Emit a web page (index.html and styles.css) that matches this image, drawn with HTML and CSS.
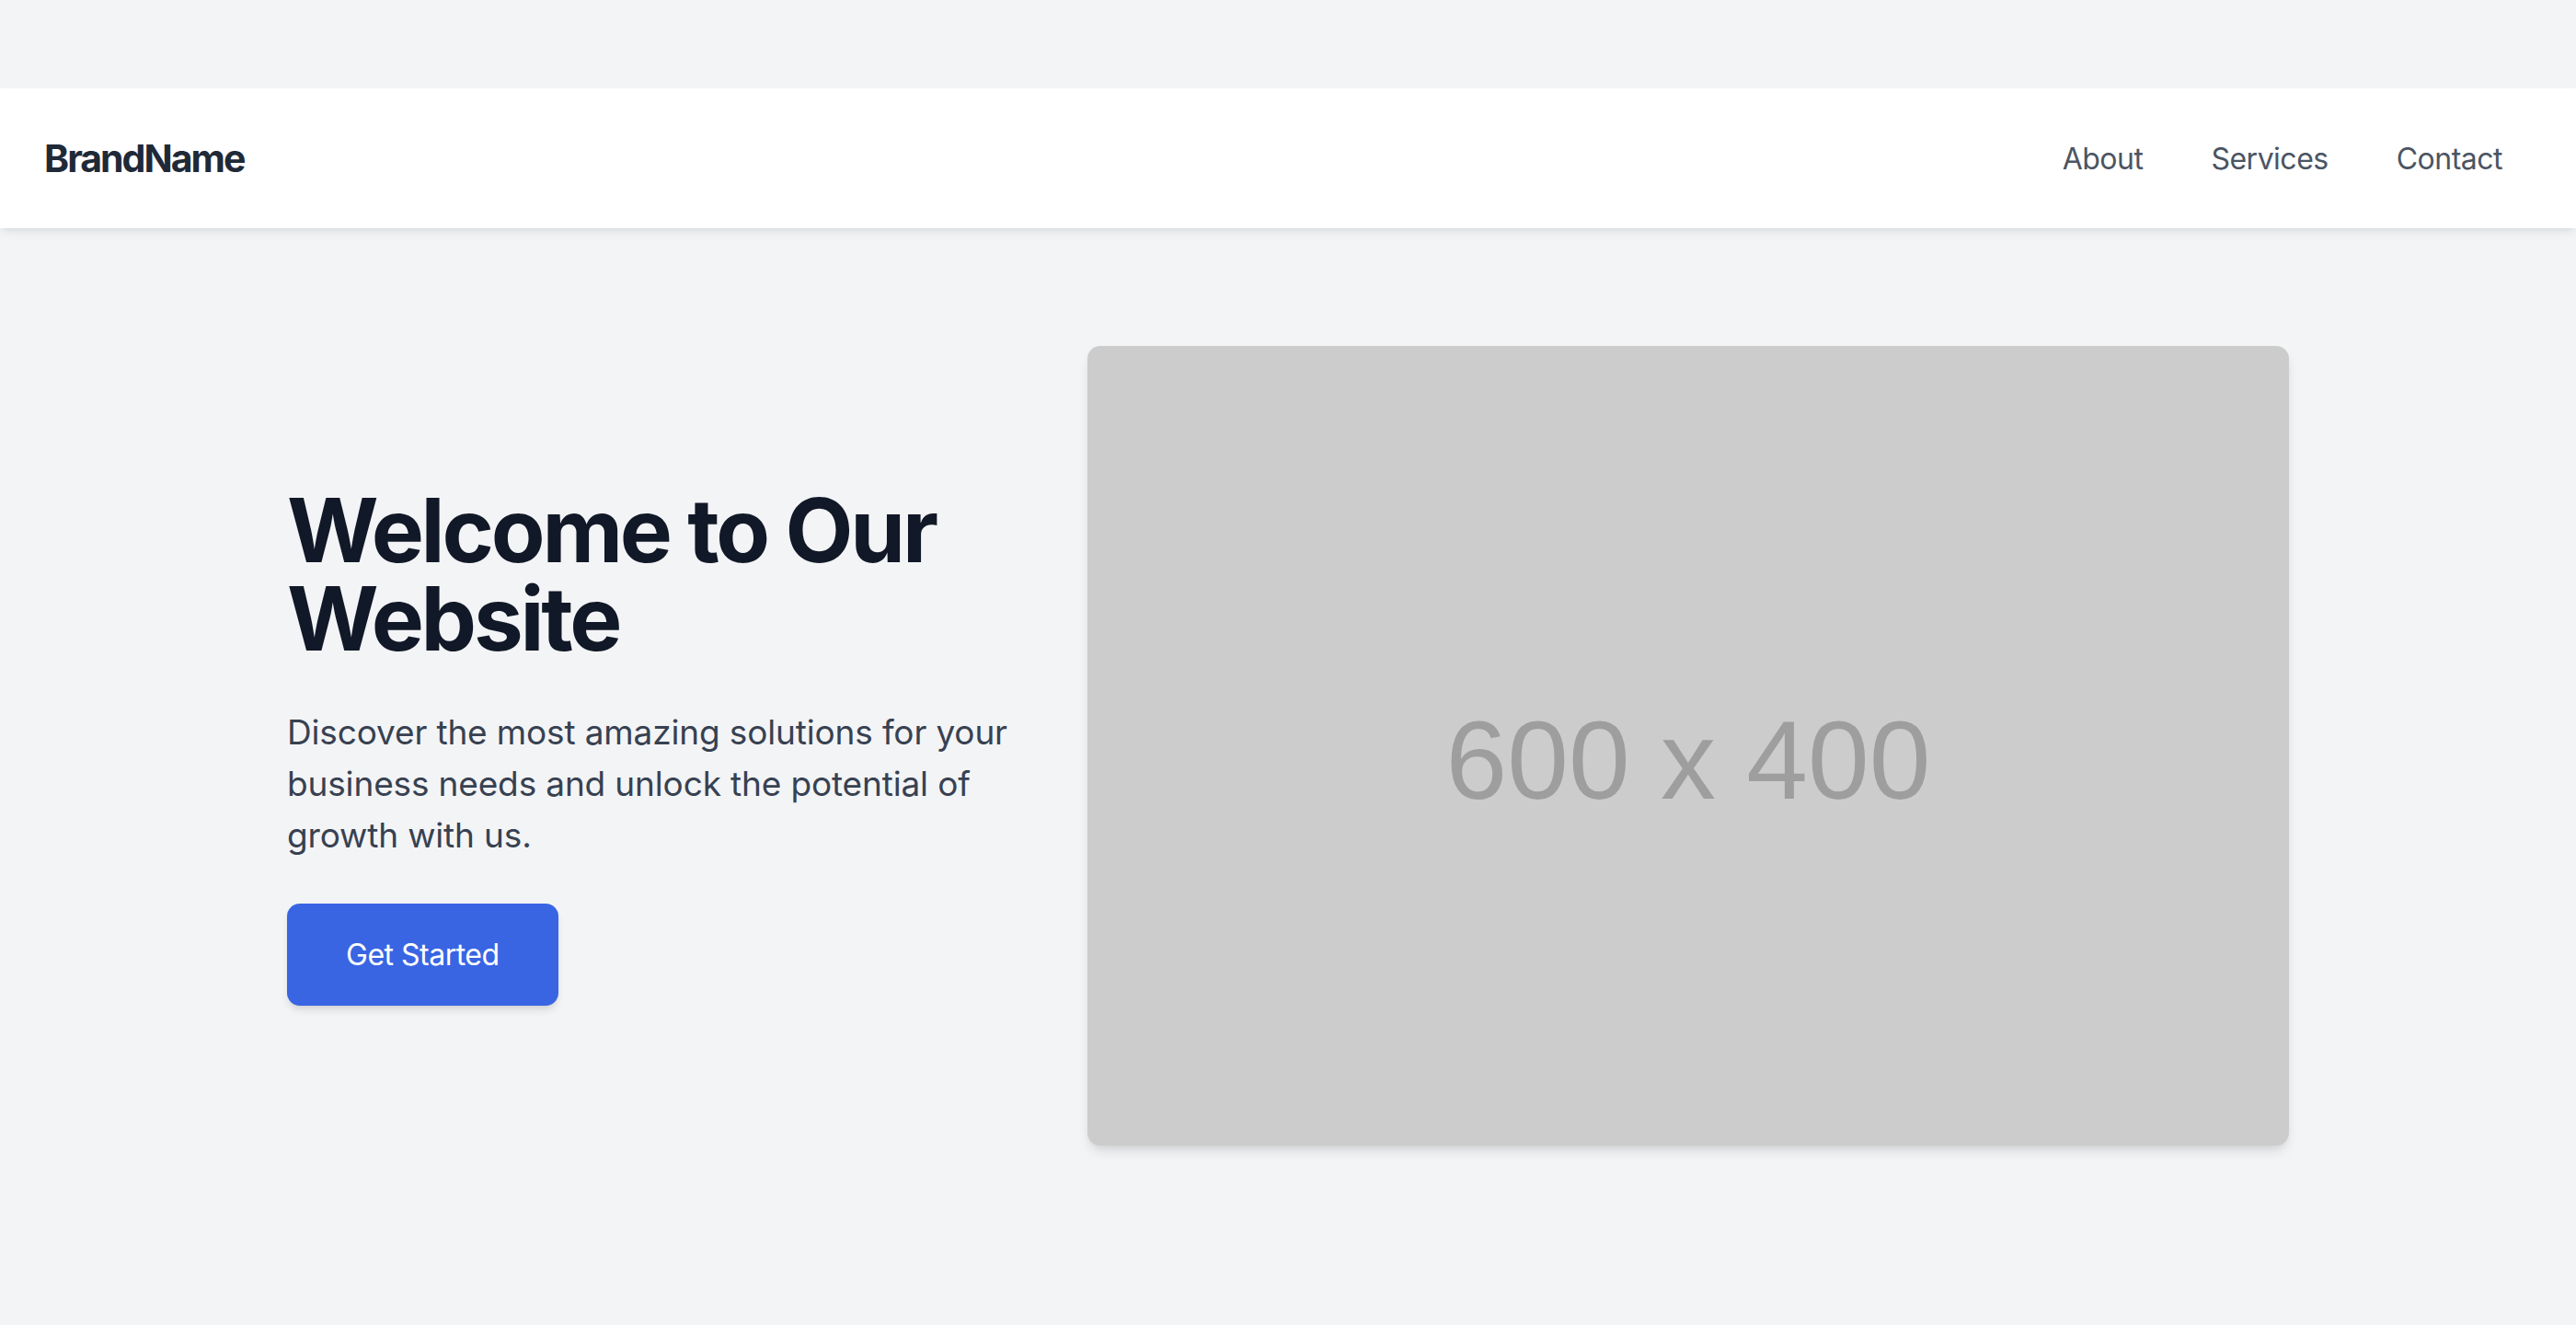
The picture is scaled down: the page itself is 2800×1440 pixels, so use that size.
FILE: index.html
```html
<!DOCTYPE html>
<html lang="en">
<head>
<meta charset="utf-8">
<title>BrandName</title>
<link rel="stylesheet" href="styles.css">
</head>
<body>
  <header class="navbar">
    <div class="brand">BrandName</div>
    <nav class="nav-links">
      <a href="#" class="nav-link">About</a>
      <a href="#" class="nav-link">Services</a>
      <a href="#" class="nav-link">Contact</a>
    </nav>
  </header>
  <main class="hero">
    <div class="hero-text">
      <h1 class="hero-title">Welcome to Our Website</h1>
      <p class="hero-desc">Discover the most amazing solutions for your business needs and unlock the potential of growth with us.</p>
      <a href="#" class="btn-primary">Get Started</a>
    </div>
    <div class="hero-image">
      <span class="placeholder-text">600 x 400</span>
    </div>
  </main>
</body>
</html>
```

FILE: styles.css
```css
* {
  box-sizing: border-box;
}

html, body {
  margin: 0;
  padding: 0;
}

body {
  background: #f3f4f6;
  font-family: Inter, "Noto Sans", sans-serif;
  min-height: 1440px;
  padding-top: 96px;
}

.navbar {
  background: #ffffff;
  height: 152px;
  display: flex;
  align-items: center;
  justify-content: space-between;
  padding: 0 80px 0 48px;
  box-shadow: 0 6px 10px -2px rgba(0, 0, 0, 0.08), 0 3px 6px -3px rgba(0, 0, 0, 0.06);
  position: relative;
  z-index: 1;
}

.brand {
  font-size: 41px;
  font-weight: 700;
  color: #1f2937;
  letter-spacing: -2px;
}

.nav-links {
  display: flex;
  gap: 74px;
}

.nav-link {
  font-size: 32px;
  color: #4b5563;
  text-decoration: none;
  letter-spacing: -0.5px;
}

.hero {
  display: flex;
  align-items: center;
  justify-content: center;
  gap: 80px;
  padding-top: 128px;
}

.hero-text {
  width: 790px;
  display: flex;
  flex-direction: column;
  align-items: flex-start;
}

.hero-title {
  margin: 0;
  font-size: 96px;
  line-height: 96px;
  font-weight: 700;
  color: #111827;
  letter-spacing: -3.2px;
}

.hero-desc {
  margin: 48px 0 0;
  font-size: 37px;
  line-height: 56px;
  color: #374151;
  letter-spacing: -0.15px;
}

.btn-primary {
  margin-top: 46px;
  height: 111px;
  padding: 0 64px;
  display: flex;
  align-items: center;
  background: #3965e3;
  color: #ffffff;
  font-size: 32px;
  letter-spacing: -0.5px;
  border-radius: 14px;
  text-decoration: none;
  box-shadow: 0 6px 10px -2px rgba(0, 0, 0, 0.12), 0 3px 6px -3px rgba(0, 0, 0, 0.08);
}

.hero-image {
  width: 1306px;
  height: 869px;
  flex: none;
  background: #cccccc;
  border-radius: 14px;
  display: flex;
  align-items: center;
  justify-content: center;
  padding-top: 30px;
  box-shadow: 0 8px 14px -3px rgba(0, 0, 0, 0.12), 0 4px 8px -4px rgba(0, 0, 0, 0.08);
}

.placeholder-text {
  font-family: "Liberation Sans", Arial, sans-serif;
  font-size: 120px;
  color: #9e9e9e;
}
```
